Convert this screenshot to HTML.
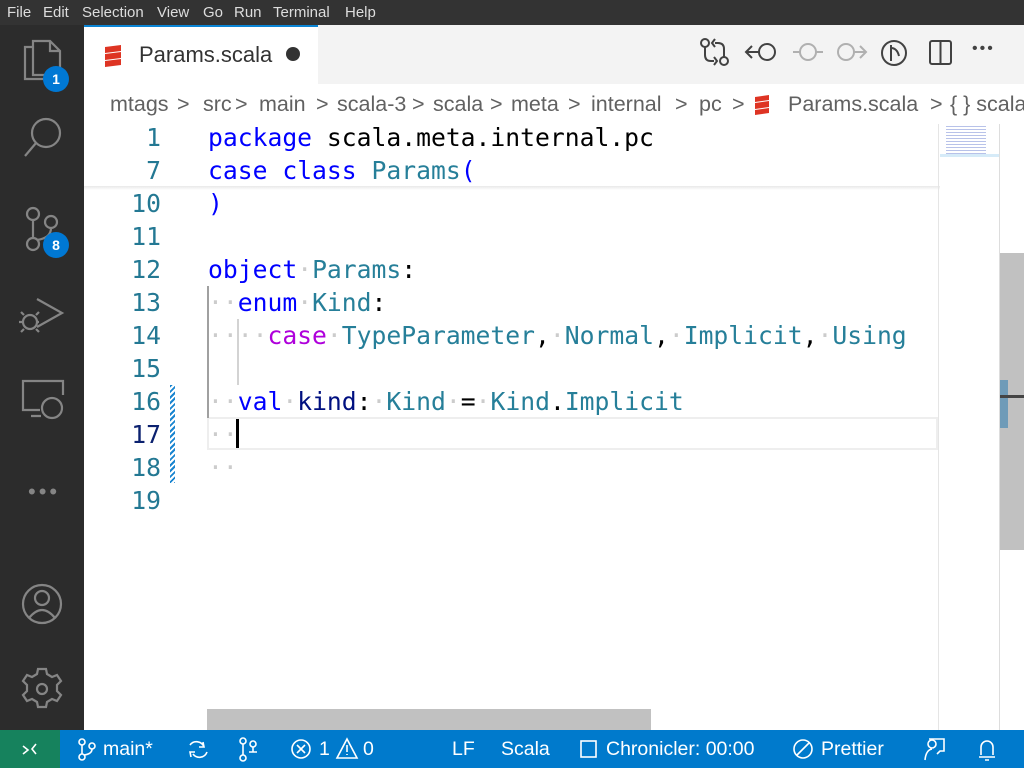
<!DOCTYPE html>
<html><head><meta charset="utf-8"><style>
*{margin:0;padding:0;box-sizing:border-box}
body{width:1024px;height:768px;overflow:hidden;background:#fff;font-family:"Liberation Sans",sans-serif;position:relative}
.abs{position:absolute}
#menu{left:0;top:0;width:1024px;height:25px;background:#333;color:#ddd;font-size:15px}
#menu span{position:absolute;top:4px}
#act{left:0;top:25px;width:84px;height:705px;background:#2c2c2c}
.badge{position:absolute;width:26px;height:26px;border-radius:13px;background:#0078d4;color:#fff;font-size:14px;font-weight:bold;text-align:center;line-height:26px}
#tabs{left:84px;top:25px;width:940px;height:59px;background:#f3f3f3}
#tab{left:84px;top:25px;width:234px;height:59px;background:#fff;border-top:2px solid #0a84d4}
#bc{left:84px;top:84px;width:940px;height:40px;color:#616161;font-size:21.5px}
#bc span{position:absolute;top:8px;white-space:nowrap}
.code{font-family:"DejaVu Sans Mono","Liberation Mono",monospace;font-size:24.7px;white-space:pre;line-height:33px}
.ln{position:absolute;left:100px;width:61px;text-align:right;color:#237893}
.tx{position:absolute;left:208px}
.kw{color:#0000ff}.ty{color:#267f99}.pk{color:#af00db}.dv{color:#001080}
.d{color:#ccc}
#status{left:0;top:730px;width:1024px;height:38px;background:#007acc;color:#fff;font-size:19.5px}
#status span{position:absolute;top:8px}
</style></head><body>
<div id="menu" class="abs"><span style="left:7px">File</span><span style="left:43px">Edit</span><span style="left:82px">Selection</span><span style="left:157px">View</span><span style="left:203px">Go</span><span style="left:234px">Run</span><span style="left:273px">Terminal</span><span style="left:345px">Help</span></div>
<div id="act" class="abs">
<svg class="abs" style="left:0;top:0" width="84" height="705" fill="none" stroke="#858585" stroke-width="2.2">
<path d="M33 22 h-8 v32 h20 v-4 M33 22 v-6 h17 l10 10 v20 M33 16 v34 h27 M50 16 v10 h10"/>
<circle cx="46" cy="108" r="14"/><path d="M36 118 L25 131"/>
<circle cx="33" cy="189" r="6"/><circle cx="33" cy="219" r="6"/><circle cx="51" cy="197" r="6"/><path d="M33 195 v18 M51 203 q0 10 -14 12"/>
<path d="M37 274 l25 14 -25 14 M30 290 a7 7 0 0 1 0 14 a7 7 0 0 1 0-14 z M22 297 h-3 M39 297 h-2 M24 290 l-3-3 M36 290 l3-3 M24 304 l-3 3 M36 304 l3 3"/>
<path d="M40 385 h-17 v-29 h40 v14 M31 391 h10"/><circle cx="52" cy="383" r="10"/>
<circle cx="42" cy="579" r="19"/><circle cx="42" cy="573" r="7"/><path d="M29 593 q13-16 26 0"/>
<circle cx="42" cy="664" r="5"/><path d="M38 644 h8 l1 5 5 3 5-2 4 6 -4 4 v6 l4 4 -4 6 -5-2 -5 3 -1 5 h-8 l-1-5 -5-3 -5 2 -4-6 4-4 v-6 l-4-4 4-6 5 2 5-3z"/>
</svg>
<div style="position:absolute;left:28px;top:454px;color:#858585;font-size:22px;letter-spacing:3px">•••</div>
<div class="badge" style="left:43px;top:41px">1</div>
<div class="badge" style="left:43px;top:207px">8</div>
</div>
<div id="tabs" class="abs"></div>
<div id="tab" class="abs">
<svg class="abs" style="left:20px;top:18px" width="18" height="22"><path d="M1 2 L17 0 V6 L1 8Z M1 9 L17 7 V13 L1 15Z M1 16 L17 14 V20 L1 22Z" fill="#de3423"/></svg>
<span class="abs" style="left:55px;top:15px;font-size:22px;color:#333">Params.scala</span>
<span class="abs" style="left:202px;top:20px;width:14px;height:14px;border-radius:7px;background:#333"></span>
</div>
<svg class="abs" style="left:690px;top:35px" width="320" height="40" fill="none" stroke="#424242" stroke-width="2">
<circle cx="15" cy="8" r="4"/><circle cx="34" cy="26" r="4"/><path d="M15 12 v8 q0 6 6 6 h3 M24 22 l3 4 -3 4 M34 22 v-8 q0-6 -6-6 h-3 M25 4 l-3 4 3 4"/>
<circle cx="77" cy="17" r="8"/><path d="M69 17 h-13 M62 11 l-6 6 6 6"/>
<g stroke="#b0b0b0"><circle cx="118" cy="17" r="8"/><path d="M103 17 h7 M126 17 h7"/><circle cx="156" cy="17" r="8"/><path d="M164 17 h12 M170 11 l6 6 -6 6"/></g>
<circle cx="204" cy="18" r="12"/><path d="M201 10 v16 M201 13 q6 0 8 8"/>
<rect x="240" y="6" width="21" height="23" rx="2"/><path d="M250.5 6 v23"/>
</svg>
<span class="abs" style="left:972px;top:40px;font-size:16px;color:#424242;letter-spacing:2px">•••</span>
<div id="bc" class="abs">
<span style="left:26px">mtags</span><span style="left:93px">&gt;</span>
<span style="left:119px">src</span><span style="left:151px">&gt;</span>
<span style="left:175px">main</span><span style="left:232px">&gt;</span>
<span style="left:253px">scala-3</span><span style="left:328px">&gt;</span>
<span style="left:349px">scala</span><span style="left:406px">&gt;</span>
<span style="left:427px">meta</span><span style="left:484px">&gt;</span>
<span style="left:507px">internal</span><span style="left:591px">&gt;</span>
<span style="left:615px">pc</span><span style="left:648px">&gt;</span>
<svg class="abs" style="left:670px;top:11px" width="16" height="20"><path d="M1 2 L15 0 V5 L1 7Z M1 8 L15 6 V12 L1 14Z M1 15 L15 13 V18 L1 20Z" fill="#de3423"/></svg>
<span style="left:704px">Params.scala</span><span style="left:846px">&gt;</span>
<span style="left:866px">{ } scala</span>
</div>
<!-- editor decorations -->
<div class="abs" style="left:207px;top:417px;width:731px;height:33px;border:2px solid #eee"></div>
<div class="abs" style="left:207px;top:286px;width:2px;height:132px;background:#a0a0a0"></div>
<div class="abs" style="left:237px;top:319px;width:2px;height:66px;background:#d3d3d3"></div>
<div class="abs" style="left:170px;top:385px;width:5px;height:98px;background:repeating-linear-gradient(135deg,#1a85d0 0 2px,#fff 2px 4px)"></div>
<div class="abs" style="left:236px;top:419px;width:3px;height:29px;background:#000"></div>
<div class="code">
<div class="ln" style="top:121px">1</div><div class="tx" style="top:121px"><span class="kw">package</span> scala.meta.internal.pc</div>
<div class="ln" style="top:154px">7</div><div class="tx" style="top:154px"><span class="kw">case</span> <span class="kw">class</span> <span class="ty">Params</span><span class="kw">(</span></div>
<div class="ln" style="top:187px">10</div><div class="tx" style="top:187px"><span class="kw">)</span></div>
<div class="ln" style="top:220px">11</div>
<div class="ln" style="top:253px">12</div><div class="tx" style="top:253px"><span class="kw">object</span><span class="d">·</span><span class="ty">Params</span>:</div>
<div class="ln" style="top:286px">13</div><div class="tx" style="top:286px"><span class="d">··</span><span class="kw">enum</span><span class="d">·</span><span class="ty">Kind</span>:</div>
<div class="ln" style="top:319px">14</div><div class="tx" style="top:319px"><span class="d">····</span><span class="pk">case</span><span class="d">·</span><span class="ty">TypeParameter</span>,<span class="d">·</span><span class="ty">Normal</span>,<span class="d">·</span><span class="ty">Implicit</span>,<span class="d">·</span><span class="ty">Using</span></div>
<div class="ln" style="top:352px">15</div>
<div class="ln" style="top:385px">16</div><div class="tx" style="top:385px"><span class="d">··</span><span class="kw">val</span><span class="d">·</span><span class="dv">kind</span>:<span class="d">·</span><span class="ty">Kind</span><span class="d">·</span>=<span class="d">·</span><span class="ty">Kind</span>.<span class="ty">Implicit</span></div>
<div class="ln" style="top:418px;color:#0b216f">17</div><div class="tx" style="top:418px"><span class="d">··</span></div>
<div class="ln" style="top:451px">18</div><div class="tx" style="top:451px"><span class="d">··</span></div>
<div class="ln" style="top:484px">19</div>
</div>
<div class="abs" style="left:84px;top:186px;width:856px;height:4px;background:linear-gradient(#e8e8e8,#fff)"></div>
<!-- minimap -->
<div class="abs" style="left:938px;top:124px;width:1px;height:606px;background:#e5e5e5"></div>
<div class="abs" style="left:946px;top:126px;width:40px;height:30px;background:repeating-linear-gradient(#9aa8e0 0 1px,#fff 1px 3px);opacity:.7"></div>
<div class="abs" style="left:940px;top:154px;width:60px;height:3px;background:#d6ebf8"></div>
<div class="abs" style="left:999px;top:124px;width:1px;height:606px;background:#ddd"></div>
<div class="abs" style="left:1000px;top:253px;width:24px;height:297px;background:#c1c1c1"></div>
<div class="abs" style="left:1000px;top:380px;width:8px;height:48px;background:#6f9bb8"></div>
<div class="abs" style="left:1000px;top:395px;width:24px;height:3px;background:#444"></div>
<div class="abs" style="left:207px;top:709px;width:444px;height:21px;background:#c1c1c1"></div>
<div id="status" class="abs">
<div class="abs" style="left:0;top:0;width:60px;height:38px;background:#16825d"></div>
<svg class="abs" style="left:0;top:0" width="1024" height="38" fill="none" stroke="#fff" stroke-width="1.6">
<path d="M23 24 l5-4 -5-4 M36 14 l-4 5 4 5"/>
<circle cx="82" cy="12" r="3"/><circle cx="82" cy="27" r="3"/><circle cx="92" cy="16" r="3"/><path d="M82 15 v9 M92 19 q0 5 -8 6"/>
<path d="M190 15 a8 8 0 0 1 14 2 M207 22 a8 8 0 0 1 -14 2 M203 12 l1 5 -5 0 M191 27 l-1-5 5 0"/>
<circle cx="243" cy="11" r="3"/><circle cx="243" cy="28" r="3"/><circle cx="253" cy="14" r="3"/><path d="M243 14 v11 M253 17 v5 M249 22 h8"/>
<circle cx="301" cy="19" r="9"/><path d="M297 15 l8 8 M305 15 l-8 8"/>
<path d="M347 9 l10 19 h-20z M347 15 v7 M347 24 v1"/>
<rect x="581" y="11" width="15" height="16"/>
<circle cx="803" cy="19" r="9"/><path d="M797 25 l12-12"/>
<circle cx="932" cy="14" r="4"/><path d="M925 30 q1-10 7-11 M929 9 h15 v12 h-4 l-3 3"/>
<path d="M979 27 h16 M981 25 v-8 a6 6 0 0 1 12 0 v8 M985 30 h4"/>
</svg>
<span style="left:103px">main*</span>
<span style="left:319px">1</span><span style="left:363px">0</span>
<span style="left:452px">LF</span><span style="left:501px">Scala</span>
<span style="left:606px">Chronicler: 00:00</span>
<span style="left:821px">Prettier</span>
</div>
</body></html>
